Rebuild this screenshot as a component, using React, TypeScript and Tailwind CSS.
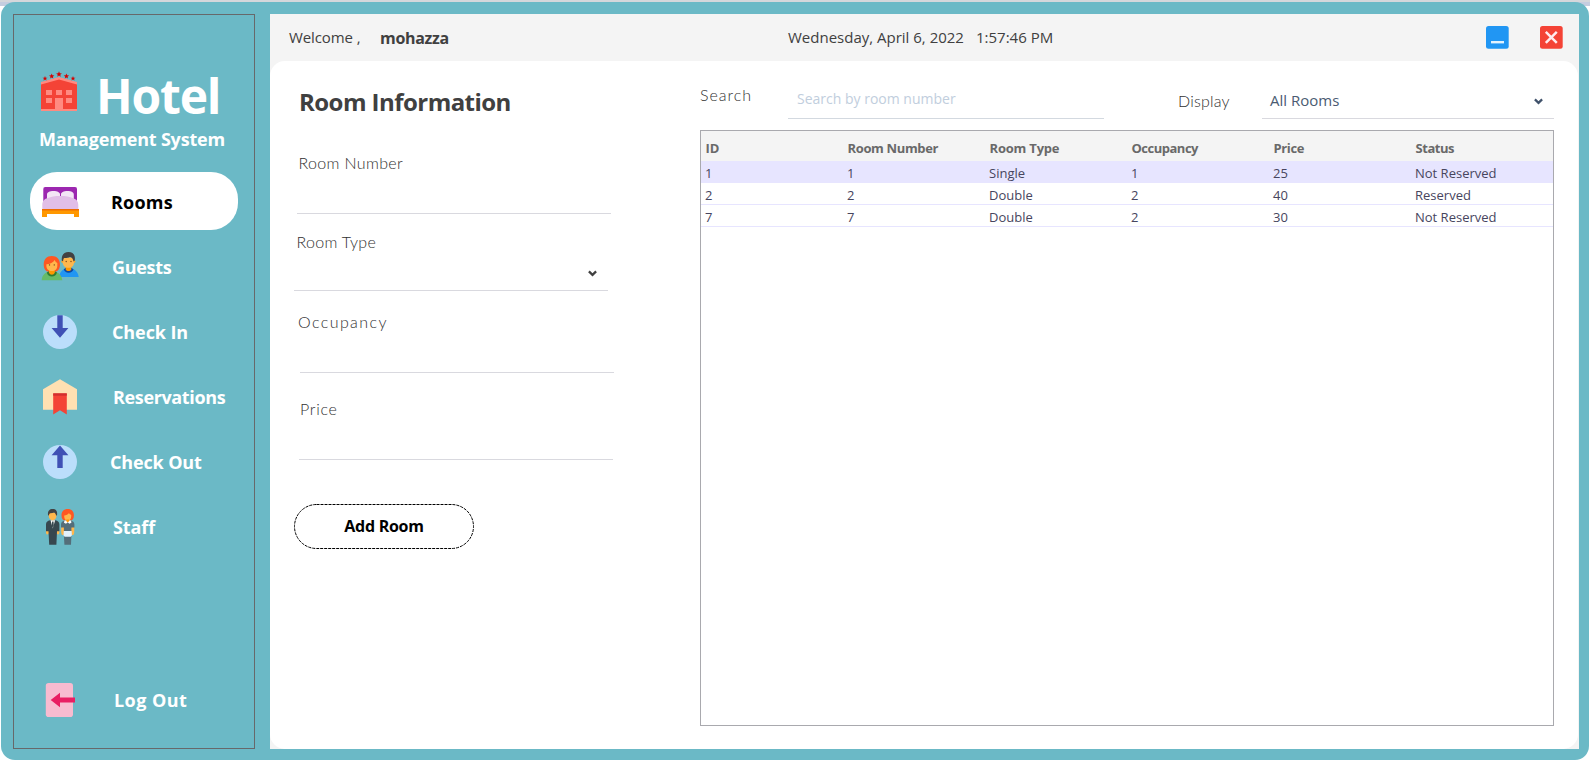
import React from "react";

const STAR = "M0-2.9 .8-.9 2.9-.8 1.2.5 1.8 2.6 0 1.4-1.8 2.6-1.2.5-2.9-.8-.8-.9Z";

function HotelLogo() {
  return (
    <svg width="40" height="42" viewBox="0 0 40 42" className="shrink-0">
      <path d="M1 13 19 8 37 13V39H1Z" fill="#f44336" />
      <path d="M1 12 19 7 37 12V14.6L19 9.4 1 14.6Z" fill="#ff8a80" />
      <path d="M1 39H37V41H1Z" fill="#ff8a80" />
      <path d="M6 20h6v5H6zM16 20h6v5h-6zM26 20h6v5h-6zM6 28h6v5H6zM26 28h6v5h-6zM15 28h8v11h-8z" fill="#ff8a80" />
      <g fill="#d50000">
        <path d={STAR} transform="translate(5 8.4) scale(.85)" />
        <path d={STAR} transform="translate(11.7 6.2) scale(.92)" />
        <path d={STAR} transform="translate(19 4.2)" />
        <path d={STAR} transform="translate(26.4 6.2) scale(.92)" />
        <path d={STAR} transform="translate(33 8.4) scale(.85)" />
      </g>
    </svg>
  );
}

function Icon({ children }: { children: React.ReactNode }) {
  return (
    <svg width="40" height="40" viewBox="0 0 40 40" className="shrink-0">
      {children}
    </svg>
  );
}

const BedIcon = () => (
  <Icon>
    <path d="M3.3 20V7.2A2 2 0 0 1 5.3 5H35a2 2 0 0 1 2 2.2V20Z" fill="#9c27b0" />
    <path d="M7 17v-4.500C7 10.500 9.500 9 13.500 9S20 10.500 20 12v5ZM21 17v-5c0-1.500 2.500-3 6.500-3s6.300 1.500 6.300 3.500V17Z" fill="#f3e5f5" />
    <path d="M2.300 27V23c0-4 2-6 5-6.800C11 14.600 15 14 20.300 14s9.500.6 13 2.200c3 1 5 2.800 5 6.800v4Z" fill="#e1bee7" />
    <path d="M2 28H39V35H34V32H7V35H2Z" fill="#ff9800" />
    <path d="M2 27H39V28.500H2Z" fill="#ef6c00" />
  </Icon>
);

const GuestsIcon = () => (
  <Icon>
    <path d="M19.300 30c.2-4 2-7 6-8.300h7c4 1.300 6 4.300 6.400 8.300Z" fill="#2196f3" />
    <path d="M23.800 22.300 25.500 21h6l2 1.300c-.6 2.200-2.400 3.400-4.900 3.400s-4.200-1.200-4.800-3.400Z" fill="#0d47a1" />
    <path d="M25.700 18.500h5.600v4c-.6 1.200-1.600 1.600-2.800 1.600s-2.200-.4-2.800-1.600Z" fill="#ff9800" />
    <circle cx="22.700" cy="14.600" r="1.400" fill="#ffa726" />
    <circle cx="34" cy="14.600" r="1.400" fill="#ffa726" />
    <path d="M22.800 10.500h11.200v5c0 3.400-2.500 5.300-5.600 5.300s-5.600-1.900-5.600-5.300Z" fill="#ffb74d" />
    <path d="M21.800 13.500C21.300 8 24 5 28.500 5c4.800 0 6.900 3 6.300 8.500l-1.300 1c-.2-2.500-1.500-4-3.500-4.600-1.800.8-4.300 1.300-5.900 1.100-.8 1-1 2.200-1 3.500Z" fill="#424242" />
    <circle cx="26.200" cy="14.500" r=".7" fill="#784719" />
    <circle cx="31" cy="14.500" r=".7" fill="#784719" />
    <path d="M11.800 9c5 0 8.200 3.400 8.200 8.500 0 4.500-2.200 7-5 7.300H8.600c-2.800-.3-4.900-2.800-4.900-7.300C3.700 12.400 6.800 9 11.800 9Z" fill="#ff5722" />
    <path d="M1.700 33.300c.2-4 2-7 6-8.300h8.200c4 1.300 6 4.300 6.400 8.300Z" fill="#66bb6a" />
    <path d="M6.800 25.600 8.600 24.500h6.600l1.800 1.100c-.7 2.700-2.600 4-5.100 4s-4.500-1.300-5.100-4Z" fill="#2e7d32" />
    <path d="M9 22h5.800v3.600c-.6 1.500-1.600 2.200-2.900 2.200S9.600 27.100 9 25.600Z" fill="#ff9800" />
    <path d="M6.400 17.200c3.600 0 6.700-1.600 8.300-4.200.6 1.500 1.600 2.500 2.600 3v3c0 3-2.300 5-5.400 5s-5.500-2-5.500-5Z" fill="#ffb74d" />
    <circle cx="9.500" cy="17.900" r=".7" fill="#784719" />
    <circle cx="14.300" cy="17.900" r=".7" fill="#784719" />
  </Icon>
);

const CheckInIcon = () => (
  <Icon>
    <circle cx="20" cy="20" r="17" fill="#bbdefb" />
    <path d="M17.300 3.200h5.400V16h5.700L20 25.800 11.600 16h5.700Z" fill="#3f51b5" />
  </Icon>
);

const ReservationsIcon = () => (
  <Icon>
    <path d="M20 2.300 37 12.300V32.700H3V12.300Z" fill="#ffe0b2" />
    <path d="M13.200 16.500H26.800V37.400L20 33.300 13.200 37.400Z" fill="#f44336" />
    <path d="M13.200 16.300H26.800V18.700H13.200Z" fill="#d32f2f" />
  </Icon>
);

const CheckOutIcon = () => (
  <Icon>
    <circle cx="20" cy="20" r="17" fill="#bbdefb" />
    <path d="M17.300 26V13.200H11.600L20 3.500 28.400 13.200H22.700V26Z" fill="#3f51b5" />
  </Icon>
);

const StaffIcon = () => (
  <Icon>
    <path d="M6 23.500h3V26c-.5 1.300-1.200 1.600-2 1.400S6 26 6 25ZM16.500 23.500h2.900V25c0 1.300-.3 2.200-1 2.400s-1.500-.1-1.900-1.400Z" fill="#ffb74d" />
    <path d="M6 24.300V17.500c0-2.500 1.500-3.600 4-4.200h5.400c2.500.6 4 1.700 4 4.200v6.800h-2.400l-.6 13.400H9.200L8.500 24.300Z" fill="#37474f" />
    <path d="M10.500 13.300h4.600L12.800 21.500Z" fill="#ffffff" />
    <path d="M12.100 14.500h1.400l.3 4.500-1 2-1-2Z" fill="#37474f" />
    <path d="M8.800 5.500h7.600V9c0 2.600-1.700 4.300-3.800 4.300S8.800 11.600 8.800 9Z" fill="#ffb74d" />
    <path d="M8 8C7.600 4 9.600 2.100 12.600 2.100c3.300 0 4.900 1.900 4.500 5.900l-1 .8c-.2-1.600-.9-2.700-2-3.200-1.300.5-2.900.8-4 .7-.8.5-1.100 1.400-1.200 2.500Z" fill="#424242" />
    <path d="M27.700 2.100c4 0 6.200 2.700 6.200 6.300 0 3.200-1.600 5-3.400 5.100h-5.600c-1.800-.1-3.400-1.900-3.400-5.100 0-3.600 2.200-6.300 6.200-6.300Z" fill="#ff5722" />
    <path d="M21.300 19.500h3V27c-.4 1-1.100 1.200-1.800 1s-1.300-1.500-1.300-3ZM31 19.500h3.200V25c0 1.500-.4 2.800-1.300 3s-1.500 0-1.900-1Z" fill="#ffb74d" />
    <path d="M21 20.500v-3c0-2.300 1.500-3.400 4-4h5.400c2.500.6 4 1.700 4 4v3h-3v8l-.4 9.200h-6.600L23.900 28.500v-8Z" fill="#546e7a" />
    <path d="M24.500 13.400h6.500l.4 2.400-2 1-1.700-1.600L26 16.800l-2-1Z" fill="#ffffff" />
    <path d="M24.200 8.500c1.900 0 3.900-.9 4.800-2.400.4.900 1.400 1.600 2.200 1.900v1.500c0 2.300-1.600 4.300-3.500 4.300s-3.500-2-3.500-4.300Z" fill="#ffb74d" />
    <path d="M26.300 12.500h2.800v1.800l-1.400 1-1.400-1Z" fill="#ff9800" />
    <path d="M23.700 24h8l.2 4.500-1.200 1.300h-6l-1.200-1.300Z" fill="#e3f2fd" />
  </Icon>
);

const LogOutIcon = () => (
  <Icon>
    <rect x="5.800" y="3" width="27.200" height="34" rx="2.800" fill="#f8bbd0" />
    <path d="M10.700 20 20 12.700V17.600H35V22.400H20V27.300Z" fill="#e91e63" />
  </Icon>
);

function Chevron({ className }: { className: string }) {
  return (
    <svg width="9" height="7" viewBox="0 0 9 7" className={className}>
      <path d="M.9 1.400 4.500 4.800 8.100 1.400" fill="none" stroke="currentColor" strokeWidth="2.300" />
    </svg>
  );
}

const nav = [
  { label: "Rooms", icon: <BedIcon />, active: true, text: "pl-[31px] tracking-[0.2px]" },
  { label: "Guests", icon: <GuestsIcon />, text: "pl-[32px] tracking-[-0.3px]" },
  { label: "Check In", icon: <CheckInIcon />, text: "pl-[32px] tracking-[-0.1px]" },
  { label: "Reservations", icon: <ReservationsIcon />, text: "pl-[33px] tracking-[-0.36px]" },
  { label: "Check Out", icon: <CheckOutIcon />, text: "pl-[30px] tracking-[-0.15px]" },
  { label: "Staff", icon: <StaffIcon />, text: "pl-[33px] tracking-[-0.1px]" },
];

function NavItem({ label, icon, active, text }: { label: string; icon: React.ReactNode; active?: boolean; text: string }) {
  return (
    <button
      className={`flex h-[58px] w-[208px] items-center rounded-[27px] pl-[10px] pt-[2px] text-left text-[18px] font-bold leading-6 ${
        active ? "bg-white text-black" : "text-white"
      }`}
    >
      {icon}
      <span className={`whitespace-nowrap ${text}`}>{label}</span>
    </button>
  );
}

function Sidebar() {
  return (
    <aside className="flex h-[735px] w-[242px] shrink-0 flex-col border border-[#67686a] pl-4">
      <div className="mt-[49px] flex h-16 items-start pl-[10px]">
        <div className="pt-[6px]">
          <HotelLogo />
        </div>
        <h1 className="pl-[16px] text-[48px] font-bold leading-[64px] tracking-[-1.2px] text-white">Hotel</h1>
      </div>
      <p className="mt-[-1px] whitespace-nowrap pl-[9px] text-[18px] font-bold leading-6 tracking-[-0.19px] text-white">
        Management System
      </p>
      <nav className="mt-[21px] flex flex-col gap-[7px]">
        {nav.map((n) => (
          <NavItem key={n.label} {...n} />
        ))}
      </nav>
      <div className="mb-5 mt-auto">
        <NavItem label="Log Out" icon={<LogOutIcon />} text="pl-[34px] tracking-[0.45px]" />
      </div>
    </aside>
  );
}

function TopBar() {
  return (
    <header className="flex h-[47px] items-center pl-[19px] pr-4 text-[15px] text-[#404040]">
      <div className="flex w-[499px] items-center">
        <span className="w-[91px] tracking-[-0.1px]">Welcome ,</span>
        <span className="text-[16px] font-bold tracking-[-0.3px]">mohazza</span>
      </div>
      <span className="w-[188px] whitespace-nowrap">Wednesday, April 6, 2022</span>
      <span className="whitespace-nowrap">1:57:46 PM</span>
      <div className="ml-auto flex gap-[31px]">
        <svg width="23" height="23" viewBox="0 0 23 23">
          <rect width="22.700" height="22.700" rx="2.500" fill="#2196f3" />
          <rect x="5" y="15" width="13" height="2.400" fill="#e3f2fd" />
        </svg>
        <svg width="23" height="23" viewBox="0 0 23 23">
          <rect width="22.700" height="22.700" rx="2.500" fill="#f44336" />
          <path d="M5.800 5.800 16.800 16.800M16.800 5.800 5.800 16.800" stroke="#ffebee" strokeWidth="2.500" />
        </svg>
      </div>
    </header>
  );
}

function Field({ label, className, labelClass, boxClass, select }: { label: string; className: string; labelClass: string; boxClass: string; select?: boolean }) {
  return (
    <div className={className}>
      <label className={`block font-['Lato',sans-serif] text-[16px] font-light leading-6 text-[#303030] ${labelClass}`}>{label}</label>
      <div className={`flex w-[314px] items-center justify-end border-b border-[#d9d9df] ${boxClass}`}>
        {select && <Chevron className="mr-[11px] mt-[3px] text-[#404040]" />}
      </div>
    </div>
  );
}

function RoomForm() {
  return (
    <section className="flex w-[430px] shrink-0 flex-col items-start pl-6 pt-[25px]">
      <h2 className="whitespace-nowrap pl-[5px] text-[24px] font-bold leading-8 tracking-[-0.55px] text-[#404040]">
        Room Information
      </h2>
      <Field label="Room Number" className="mt-[33px] pl-[3px]" labelClass="pl-[1.500px] tracking-[0.35px]" boxClass="h-[39px]" />
      <Field label="Room Type" className="mt-4" labelClass="pl-[2.500px] tracking-[0.3px]" boxClass="h-[37px]" select />
      <Field label="Occupancy" className="mt-[19px] pl-[6px]" labelClass="ml-[-2px] tracking-[1.400px]" boxClass="h-[39px]" />
      <Field label="Price" className="mt-6 pl-[5px]" labelClass="pl-px tracking-[0.7px]" boxClass="h-[39px]" />
      <button className="relative mt-11 flex h-[45px] w-[180px] items-center justify-center pb-[2px] text-[16px] font-bold leading-6 tracking-[-0.26px] text-black">
        <svg width="180" height="45" viewBox="0 0 180 45" className="absolute inset-0">
          <rect x=".5" y=".5" width="179" height="44" rx="22" fill="none" stroke="#000" strokeDasharray="3 1" />
        </svg>
        Add Room
      </button>
    </section>
  );
}

const columns = [
  { label: "ID", cls: "" },
  { label: "Room Number", cls: "tracking-[-0.36px]" },
  { label: "Room Type", cls: "tracking-[-0.2px]" },
  { label: "Occupancy", cls: "tracking-[-0.5px]" },
  { label: "Price", cls: "tracking-[-0.35px]" },
  { label: "Status", cls: "tracking-[-0.45px]" },
];

const rooms = [
  ["1", "1", "Single", "1", "25", "Not Reserved"],
  ["2", "2", "Double", "2", "40", "Reserved"],
  ["7", "7", "Double", "2", "30", "Not Reserved"],
];

function RoomList() {
  return (
    <section className="flex w-[854px] flex-col pt-[22px]">
      <div className="flex h-9 items-start">
        <span className="w-[88px] font-['Lato',sans-serif] text-[16px] font-light leading-6 tracking-[1px] text-[#303030]">Search</span>
        <div className="h-9 w-[316px] border-b border-[#d3d9e0] pl-[9px] pt-1 text-[14px] leading-6 text-[#c1cedd]">
          Search by room number
        </div>
        <span className="ml-[74px] mt-[6px] w-[84px] font-['Lato',sans-serif] text-[16px] font-light leading-6 tracking-[0.2px] text-[#303030]">Display</span>
        <div className="flex h-9 w-[292px] items-start justify-between border-b border-[#d9d9df] pl-2 pr-[11px] pt-[5px] text-[15px] leading-6 text-[#4a5b72]">
          All Rooms
          <Chevron className="mt-[10px] text-[#40526b]" />
        </div>
      </div>
      <div className="mt-[11px] h-[596px] border border-[#a9a9ae] bg-white">
        <div className="grid h-[30px] grid-cols-6 items-center bg-[#f4f4f4] pt-[4px] text-[13px] font-bold leading-5 text-[#696969]">
          {columns.map((c) => (
            <span key={c.label} className={`whitespace-nowrap pl-[4.500px] ${c.cls}`}>
              {c.label}
            </span>
          ))}
        </div>
        {rooms.map((row, i) => (
          <div
            key={row[0]}
            className={`grid h-[22px] grid-cols-6 items-center border-b border-[#e7e5ff] pt-[3px] text-[13px] leading-4 text-[#47455e] ${
              i === 0 ? "bg-[#e7e5ff]" : ""
            }`}
          >
            {row.map((cell, j) => (
              <span key={j} className="whitespace-nowrap pl-1">
                {cell}
              </span>
            ))}
          </div>
        ))}
      </div>
    </section>
  );
}

export default function App() {
  return (
    <div className="h-[760px] w-[1590px] overflow-hidden bg-[linear-gradient(#d5d7db_0,#d5d7db_2px,#c5cddf_2px,#c5cddf_6px,#ffffff_6px)] px-px pt-[2px] font-['Open_Sans','Noto_Sans',sans-serif]">
      <div className="flex h-[758px] rounded-[14px] bg-[#6bb9c6] pl-3 pt-3">
        <Sidebar />
        <div className="ml-[15px] h-[735px] w-[1309px] bg-[#f4f4f4]">
          <TopBar />
          <main className="flex h-[688px] w-[1308px] rounded-[15px] bg-white">
            <RoomForm />
            <RoomList />
          </main>
        </div>
      </div>
    </div>
  );
}
